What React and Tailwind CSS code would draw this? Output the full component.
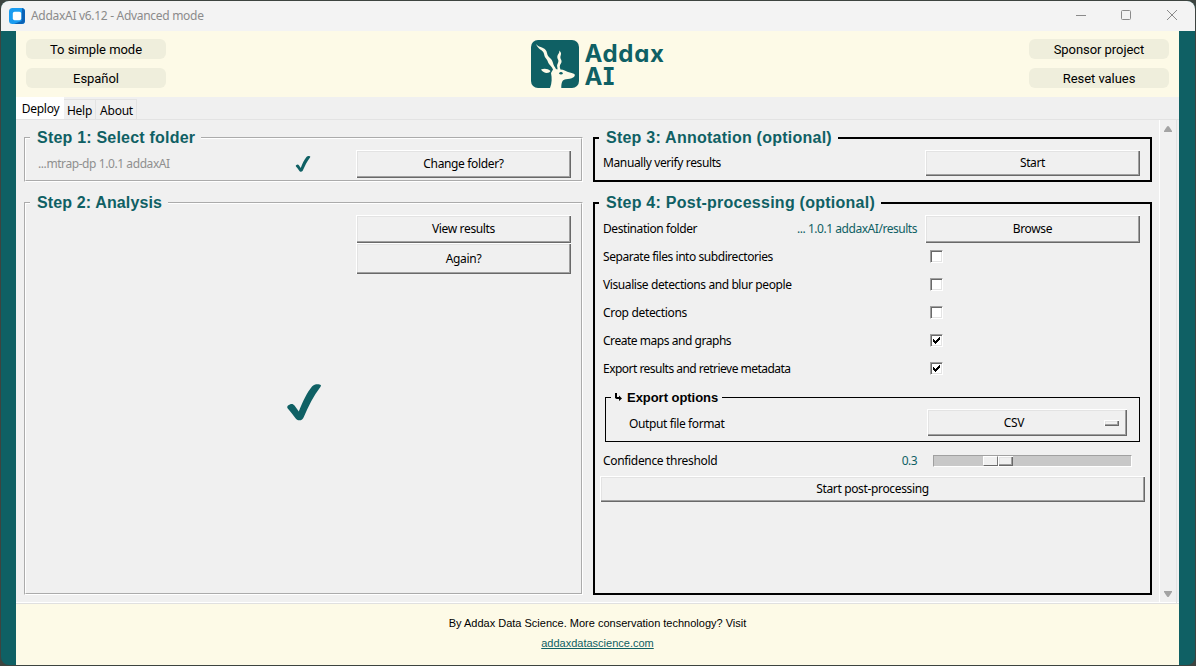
import React from "react";

const BEVEL =
  "bg-[#f0f0f0] border-t border-l border-white shadow-[inset_-1px_-1px_0_#696969,inset_-2px_-2px_0_#a0a0a0,inset_1px_1px_0_#e3e3e3]";

function RaisedButton({ children, className }) {
  return (
    <button className={`block shrink-0 pr-px text-center text-black ${BEVEL} ${className}`}>{children}</button>
  );
}

function PillButton({ children, className = "" }) {
  return (
    <button className={`h-5 w-[140px] rounded-md bg-[#efeedc] text-center font-[Roboto] text-[13px] leading-[21px] tracking-[-0.05px] text-black ${className}`}>
      {children}
    </button>
  );
}

function Step({ title, heavy, titleClass, className, children }) {
  return (
    <fieldset
      className={`min-w-0 ${heavy ? "border-2 border-black" : "border-2 border-white [border-style:groove]"} ${className}`}
    >
      <legend className="ml-1 h-5 pr-[6px] pl-[7px] font-['Liberation_Sans'] text-[16px] leading-5 font-bold whitespace-nowrap text-[#0f6064]">
        <span className={titleClass}>{title}</span>
      </legend>
      {children}
    </fieldset>
  );
}

function Check({ className }) {
  return (
    <svg viewBox="0 0 34 37" className={className} fill="#0f6064">
      <path d="M1 21.500C3.500 19.500 6 19.300 7.500 21.500L11.800 27.500C15.500 18 20 8.500 25 2.500C27 .2 30 0 32.500 .4C34.500 .8 34.200 2 33.200 3.200C26.500 12 21.500 22 16.800 33C15.800 35.500 14.500 36.300 12.500 36.300C10.500 36.300 9.500 35.600 8.300 34C6 31 3.500 27.500 .8 24.500C-.1 23.500 .2 22.300 1 21.500Z" />
    </svg>
  );
}

function Checkbox({ checked }) {
  return (
    <span className="mb-px flex h-[13px] w-[13px] items-center justify-center border border-t-[#a0a0a0] border-r-white border-b-white border-l-[#a0a0a0] bg-white shadow-[inset_1px_1px_0_#696969,inset_-1px_-1px_0_#e3e3e3]">
      {checked && (
        <svg viewBox="0 0 7 7" className="h-[7px] w-[7px]" fill="#000" shapeRendering="crispEdges">
          <path d="M0 2h1v1h1v1h1v-1h1v-1h1v-1h1v-1h1v3h-1v1h-1v1h-1v1h-1v1h-1v-1h-1v-1h-1z" />
        </svg>
      )}
    </span>
  );
}

const OPTIONS = [
  { label: "Separate files into subdirectories", checked: false, track: "tracking-[-0.44px]" },
  { label: "Visualise detections and blur people", checked: false, track: "tracking-[-0.41px]" },
  { label: "Crop detections", checked: false, track: "tracking-[-0.33px]" },
  { label: "Create maps and graphs", checked: true, track: "tracking-[-0.46px]" },
  { label: "Export results and retrieve metadata", checked: true, track: "tracking-[-0.52px]" },
];

function TitleBar() {
  return (
    <div className="flex h-[30px] shrink-0 items-center bg-[#f3f3f3] pl-2">
      <svg viewBox="0 0 16 16" className="mb-px h-4 w-4">
        <rect width="16" height="16" rx="3.5" fill="#1a9cf0" />
        <path d="M13 0C15 .4 16 1.500 16 3.500V12.500C16 15 14.800 16 12.500 16H5L12.500 13Z" fill="#0b62b6" />
        <rect x="3.800" y="3.800" width="8.400" height="8.400" rx="1.800" fill="#fff" />
      </svg>
      <span className="ml-[6px] text-[12px] tracking-[-0.3px] text-[#8b8b8b]">AddaxAI v6.12 - Advanced mode</span>
      <svg viewBox="0 0 102 12" className="mr-[17px] ml-auto h-3 w-[102px]" fill="none" stroke="#8a8a8a">
        <path d="M0 5.500H10" />
        <rect x="45.500" y=".5" width="9" height="9" rx="1" />
        <path d="M91 0L101 10M101 0L91 10" />
      </svg>
    </div>
  );
}

function Logo() {
  return (
    <div className="ml-px flex">
      <svg viewBox="0 0 48 48" className="mt-[9px] h-12 w-12" fill="#fdfae7">
        <rect width="48" height="48" rx="7" fill="#0f6064" />
        <path d="M5 4C7 6.500 9 6.700 11.500 7.700C14.500 9 15.500 10.500 16 13C16.500 15.500 17.500 16.500 19 18C21 20 21.500 21 22 23C22.500 25.500 24 27 25 29L26.400 29.500C27 27.500 25.500 26.500 26.300 24.500C27 22.500 28 21.500 27 19.500C26 17.500 26 16.500 27 14.500C28 13 28.500 12.500 28.200 10.500C30 12 30.500 13.500 29.700 15.500C29 17.500 29.500 18.500 30.300 20C31 22 30.300 23 29.300 24.500C28.300 26.500 29 28 29.500 29.500C33 29.500 34.500 31 37 32C39.500 32.800 42 33 43.300 34C44.300 35 43.800 36.500 42.500 37.300C40 39 37.500 39 35 39.200C31.500 39.500 30.300 42 30.300 48H19C21 43 21 38 20 33L22 29.500C21 27 19.500 26 18 24C16.500 22 17 20.500 15 18.500C13 16.500 13.500 14.500 12.500 12.500C11.500 10.500 9.500 10 8 8.500C6.500 7 5.500 5.500 5 4Z" />
        <path d="M10 29.500C13 28 17 28.500 19.500 31C18.500 33.500 12.500 34 10 29.500Z" />
        <ellipse cx="30" cy="33.300" rx="1.700" ry="1.300" fill="#0f6064" />
      </svg>
      <div className="mt-[11px] ml-[5px] font-[Inter] text-[24px] leading-[23px] font-bold tracking-[0.7px] text-[#0f6064] [font-feature-settings:'cv08','cv11']">
        <div>Addax</div>
        <div>AI</div>
      </div>
    </div>
  );
}

export default function App() {
  return (
    <div className="h-[666px] w-[1196px] overflow-hidden bg-[#3d4440] p-px font-['Noto_Sans',sans-serif] text-[12px] text-black">
      <div className="flex h-[664px] flex-col overflow-hidden rounded-lg bg-[#0f6064]">
        <TitleBar />
        <div className="mr-4 ml-[15px] flex min-h-0 flex-1 flex-col bg-[#fdfae7]">
          <header className="flex h-[66px] shrink-0 justify-between px-[10px]">
            <div className="flex flex-col gap-[9px] pt-2">
              <PillButton>To simple mode</PillButton>
              <PillButton>Español</PillButton>
            </div>
            <Logo />
            <div className="flex flex-col gap-[9px] pt-2">
              <PillButton>Sponsor project</PillButton>
              <PillButton>Reset values</PillButton>
            </div>
          </header>

          <nav className="flex h-[23px] shrink-0 items-end border-b border-[#e3e3e3] bg-[#f0f0f0] tracking-[-0.25px]">
            <div className="h-[22px] w-12 bg-white pl-px text-center leading-[24px]">Deploy</div>
            <div className="h-5 w-8 border-t border-r border-[#e3e3e3] text-center leading-[22px]">Help</div>
            <div className="h-5 w-[41px] border-t border-r border-[#e3e3e3] pl-px text-center leading-[22px]">About</div>
          </nav>

          <main className="flex h-[484px] shrink-0 border-b border-[#e0e0e0] bg-[#f0f0f0] shadow-[inset_0_-1px_0_#fff]">
            <div className="flex w-[1143px] pt-2 pl-2">
              <section className="w-[559px]">
                <Step title="Step 1: Select folder" titleClass="tracking-[0.21px]" className="h-[54px]">
                  <div className="flex pt-[2px] pr-[10px] pl-3">
                    <span className="w-[257px] leading-[27px] tracking-[-0.42px] text-[#8f8f8f]">...mtrap-dp 1.0.1 addaxAI</span>
                    <Check className="mt-[6px] h-4 w-4" />
                    <RaisedButton className="ml-auto h-7 w-[215px] pb-[2px] leading-[25px] tracking-[-0.35px]">Change folder?</RaisedButton>
                  </div>
                </Step>
                <Step title="Step 2: Analysis" titleClass="tracking-[0.13px]" className="mt-[11px] h-[402px]">
                  <div className="flex flex-col items-end pt-[2px] pr-[10px]">
                    <RaisedButton className="h-7 w-[215px] pb-[2px] leading-[25px] tracking-[-0.35px]">View results</RaisedButton>
                    <RaisedButton className="h-[31px] w-[215px] leading-[30px] tracking-[-0.3px]">Again?</RaisedButton>
                  </div>
                  <Check className="mt-[110px] ml-[261px] h-[37px] w-[34px]" />
                </Step>
              </section>

              <section className="ml-[10px] w-[559px]">
                <Step heavy title="Step 3: Annotation (optional)" titleClass="tracking-[0.24px]" className="h-[54px]">
                  <div className="flex justify-between pt-[2px] pr-[10px] pl-2">
                    <span className="leading-[26px] tracking-[-0.38px]">Manually verify results</span>
                    <RaisedButton className="h-[26px] w-[215px] pb-[2px] leading-[23px] tracking-[-0.35px]">Start</RaisedButton>
                  </div>
                </Step>
                <Step heavy title="Step 4: Post-processing (optional)" titleClass="tracking-[0.25px]" className="mt-[11px] h-[402px]">
                  <div className="flex pt-[2px] pr-[10px] pl-2 leading-7">
                    <span className="tracking-[-0.42px]">Destination folder</span>
                    <span className="ml-auto tracking-[-0.46px] text-[#0f6064]">... 1.0.1 addaxAI/results</span>
                    <RaisedButton className="ml-2 h-7 w-[215px] pb-[2px] leading-[25px] tracking-[-0.35px]">Browse</RaisedButton>
                  </div>
                  {OPTIONS.map((o) => (
                    <div key={o.label} className="flex h-7 items-center pl-2">
                      <span className={`w-[327px] leading-5 ${o.track}`}>{o.label}</span>
                      <Checkbox checked={o.checked} />
                    </div>
                  ))}
                  <fieldset className="mt-[5px] mr-[10px] ml-[10px] h-[54px] border border-black">
                    <legend className="ml-[5px] flex h-[18px] items-center pr-1 pl-1 font-['Liberation_Sans'] text-[13px] leading-[18px] font-bold">
                      <svg viewBox="0 0 7 8" className="mr-[5px] h-2 w-[7px]" fill="#000">
                        <path d="M0 0H2V4H4V2.500L7 5.500L4 8V6H1.500L0 5Z" />
                      </svg>
                      <span className="pt-[2px] tracking-[-0.04px]">Export options</span>
                    </legend>
                    <div className="flex justify-between pt-[3px] pr-3 pl-[23px]">
                      <span className="leading-[29px] tracking-[-0.38px]">Output file format</span>
                      <RaisedButton className="h-[27px] w-[200px] leading-[26px]">
                        <span className="flex items-center">
                          <span className="w-[172px] tracking-[-0.3px]">CSV</span>
                          <span className={`ml-1 block h-[6px] w-[15px] ${BEVEL}`} />
                        </span>
                      </RaisedButton>
                    </div>
                  </fieldset>
                  <div className="mt-[5px] flex h-7 items-center pr-[18px] pl-2">
                    <span className="tracking-[-0.33px]">Confidence threshold</span>
                    <span className="ml-auto tracking-[-0.6px] text-[#0f6064]">0.3</span>
                    <div className="ml-4 flex h-[12px] w-[199px] border border-t-[#a0a0a0] border-r-white border-b-white border-l-[#a0a0a0] bg-[#c8c8c8] pl-[49px]">
                      <div className="h-[10px] w-[15px] border border-t-white border-r-[#777] border-b-[#696969] border-l-white bg-[#f0f0f0]" />
                      <div className={`h-[10px] w-[15px] ${BEVEL}`} />
                    </div>
                  </div>
                  <RaisedButton className="mt-px ml-[5px] h-[26px] w-[545px] pb-[2px] leading-[23px] tracking-[-0.35px]">Start post-processing</RaisedButton>
                </Step>
              </section>
            </div>
            <div className="flex w-[18px] flex-col items-center justify-between border-r border-l border-r-[#e3e3e3] border-l-white py-[6px]">
              <svg viewBox="0 0 8 6" className="h-[6px] w-2" fill="#a3a3a3">
                <path d="M3 .5Q4-.5 5 .5L8 5V6H0V5Z" />
              </svg>
              <svg viewBox="0 0 8 6" className="h-[6px] w-2" fill="#a3a3a3">
                <path d="M3 5.500Q4 6.500 5 5.500L8 1V0H0V1Z" />
              </svg>
            </div>
          </main>

          <footer className="flex flex-1 flex-col items-center pt-[9px] font-['Liberation_Sans'] text-[11px] leading-5">
            <span>By Addax Data Science. More conservation technology? Visit</span>
            <a className="text-[#0f6064] underline">addaxdatascience.com</a>
          </footer>
        </div>
      </div>
    </div>
  );
}
